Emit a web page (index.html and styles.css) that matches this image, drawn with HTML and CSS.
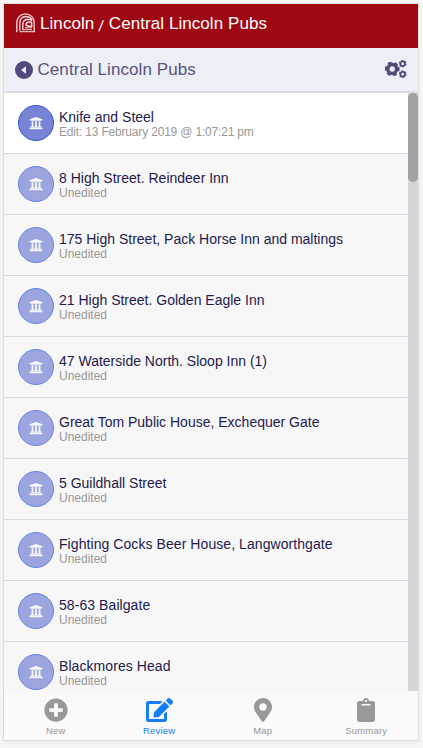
FILE: index.html
```html
<!DOCTYPE html>
<html lang="en">
<head>
<meta charset="utf-8">
<title>Central Lincoln Pubs</title>
<link rel="stylesheet" href="styles.css">
</head>
<body>
<svg class="defs" aria-hidden="true">
  <symbol id="building" viewBox="0 0 512 512"><path d="M496 128v16a8 8 0 0 1-8 8h-24v12c0 6.627-5.373 12-12 12H60c-6.627 0-12-5.373-12-12v-12H24a8 8 0 0 1-8-8v-16a8 8 0 0 1 4.941-7.392l232-88a7.996 7.996 0 0 1 6.118 0l232 88A8 8 0 0 1 496 128zm-24 304H40c-13.255 0-24 10.745-24 24v16a8 8 0 0 0 8 8h464a8 8 0 0 0 8-8v-16c0-13.255-10.745-24-24-24zM96 192v192H60c-6.627 0-12 5.373-12 12v20h416v-20c0-6.627-5.373-12-12-12h-36V192h-64v192h-64V192h-64v192h-64V192H96z"/></symbol>
</svg>
<div class="app">
  <header class="header">
    <svg class="logo" viewBox="0 0 19 20" fill="none" stroke="#fff">
      <path stroke-width="1.300" d="M.8 19.300V9.500a8.700 8.700 0 0 1 17.400 0V19.300"/>
      <path stroke-width="1.300" d="M3.800 17.800V10Q4 3.800 10 3.500Q14 3.500 16 6.800"/>
      <path stroke-width="1.400" d="M6.800 16.300V11.500Q7 6.500 12 6.300Q14.500 6.300 16 8"/>
      <path stroke-width="1.500" d="M12.300 12.800Q9.800 12.800 10 11.500Q10.300 9 13.500 9Q15 9 15.700 9.800V13.200H11.500"/>
      <path stroke-width="1" d="M9 14.800H16M6 16.700H16M3.500 18.700H18.500"/>
    </svg>
    <span class="crumb">Lincoln <span class="slash">/</span> Central Lincoln Pubs</span>
  </header>
  <div class="bar">
    <svg class="back" viewBox="0 0 18 18"><circle cx="9" cy="9" r="9" fill="#514a7b"/><path d="M11 5.200V12.800L6 9z" fill="#eceff5"/></svg>
    <h1 class="title">Central Lincoln Pubs</h1>
    <svg class="cogs" viewBox="0 0 22 18" fill="none" stroke="#514a7b">
      <circle cx="7.200" cy="9" r="4.400" stroke-width="3.500"/>
      <circle cx="7.200" cy="9" r="6.300" stroke-width="2.200" stroke-dasharray="3.800 2.797" stroke-dashoffset="-1.400" transform="rotate(-30 7.200 9)"/>
      <circle cx="17.700" cy="3.700" r="2.300" stroke-width="1.700"/>
      <circle cx="17.700" cy="3.700" r="3.200" stroke-width="1.200" stroke-dasharray="1.900 1.451"/>
      <circle cx="17.700" cy="14.200" r="2.300" stroke-width="1.700"/>
      <circle cx="17.700" cy="14.200" r="3.200" stroke-width="1.200" stroke-dasharray="1.900 1.451"/>
    </svg>
  </div>
  <main class="scroller">
    <ul class="list">
      <li class="row edited"><span class="badge"><svg><use href="#building"/></svg></span><div class="text"><div class="name">Knife and Steel</div><div class="state">Edit: 13 February 2019 @ 1:07:21 pm</div></div></li>
      <li class="row"><span class="badge"><svg><use href="#building"/></svg></span><div class="text"><div class="name">8 High Street. Reindeer Inn</div><div class="state">Unedited</div></div></li>
      <li class="row"><span class="badge"><svg><use href="#building"/></svg></span><div class="text"><div class="name">175 High Street, Pack Horse Inn and maltings</div><div class="state">Unedited</div></div></li>
      <li class="row"><span class="badge"><svg><use href="#building"/></svg></span><div class="text"><div class="name">21 High Street. Golden Eagle Inn</div><div class="state">Unedited</div></div></li>
      <li class="row"><span class="badge"><svg><use href="#building"/></svg></span><div class="text"><div class="name">47 Waterside North. Sloop Inn (1)</div><div class="state">Unedited</div></div></li>
      <li class="row"><span class="badge"><svg><use href="#building"/></svg></span><div class="text"><div class="name">Great Tom Public House, Exchequer Gate</div><div class="state">Unedited</div></div></li>
      <li class="row"><span class="badge"><svg><use href="#building"/></svg></span><div class="text"><div class="name">5 Guildhall Street</div><div class="state">Unedited</div></div></li>
      <li class="row"><span class="badge"><svg><use href="#building"/></svg></span><div class="text"><div class="name wide">Fighting Cocks Beer House, Langworthgate</div><div class="state">Unedited</div></div></li>
      <li class="row"><span class="badge"><svg><use href="#building"/></svg></span><div class="text"><div class="name wide">58-63 Bailgate</div><div class="state">Unedited</div></div></li>
      <li class="row"><span class="badge"><svg><use href="#building"/></svg></span><div class="text"><div class="name wide">Blackmores Head</div><div class="state">Unedited</div></div></li>
    </ul>
    <div class="track"><div class="thumb"></div></div>
  </main>
  <nav class="tabs">
    <a class="tab"><svg viewBox="0 0 512 512"><path d="M256 8C119 8 8 119 8 256s111 248 248 248 248-111 248-248S393 8 256 8zm144 276c0 6.600-5.400 12-12 12h-92v92c0 6.600-5.400 12-12 12h-56c-6.600 0-12-5.400-12-12v-92h-92c-6.600 0-12-5.400-12-12v-56c0-6.600 5.400-12 12-12h92v-92c0-6.600 5.400-12 12-12h56c6.600 0 12 5.400 12 12v92h92c6.600 0 12 5.400 12 12v56z"/></svg><span>New</span></a>
    <a class="tab active"><svg viewBox="0 0 576 512"><path d="M402.600 83.200l90.200 90.200c3.800 3.800 3.800 10 0 13.800L274.400 405.600l-92.800 10.300c-12.400 1.400-22.900-9.100-21.500-21.500l10.300-92.800L388.800 83.200c3.800-3.800 10-3.800 13.800 0zm162-22.900l-48.800-48.800c-15.200-15.200-39.900-15.200-55.200 0l-35.400 35.400c-3.800 3.800-3.800 10 0 13.800l90.200 90.200c3.800 3.800 10 3.800 13.800 0l35.400-35.400c15.200-15.300 15.200-40 0-55.200zM384 346.200V448H64V128h229.800c3.200 0 6.200-1.300 8.500-3.500l40-40c7.600-7.600 2.200-20.500-8.500-20.500H48C21.500 64 0 85.500 0 112v352c0 26.500 21.500 48 48 48h352c26.500 0 48-21.500 48-48V306.200c0-10.700-12.900-16-20.500-8.500l-40 40c-2.200 2.300-3.500 5.300-3.500 8.500z"/></svg><span>Review</span></a>
    <a class="tab"><svg viewBox="0 0 384 512"><path d="M172.268 501.670C26.970 291.031 0 269.413 0 192 0 85.961 85.961 0 192 0s192 85.961 192 192c0 77.413-26.970 99.031-172.268 309.670-9.535 13.774-29.930 13.773-39.464 0zM192 272c44.183 0 80-35.817 80-80s-35.817-80-80-80-80 35.817-80 80 35.817 80 80 80z"/></svg><span>Map</span></a>
    <a class="tab"><svg viewBox="0 0 384 512"><path d="M384 112v352c0 26.510-21.490 48-48 48H48c-26.510 0-48-21.490-48-48V112c0-26.510 21.490-48 48-48h80c0-35.290 28.710-64 64-64s64 28.710 64 64h80c26.510 0 48 21.490 48 48zM192 40c-13.255 0-24 10.745-24 24s10.745 24 24 24 24-10.745 24-24-10.745-24-24-24m96 114v-20a6 6 0 0 0-6-6H102a6 6 0 0 0-6 6v20a6 6 0 0 0 6 6h180a6 6 0 0 0 6-6z"/></svg><span>Summary</span></a>
  </nav>
</div>
</body>
</html>
```
FILE: styles.css
```css
* { box-sizing: border-box; }
body {
  margin: 0;
  height: 748px;
  padding: 3px 4px 7px 3px;
  background: #f7f7f7;
  font-family: "Liberation Sans", Arial, sans-serif;
  overflow: hidden;
}
.defs { display: none; }
.app {
  height: 738px;
  border: 1px solid #dedede;
  display: flex;
  flex-direction: column;
  background: #fafafa;
  box-shadow: 0 2px 6px rgba(0, 0, 0, .06);
}
.header {
  height: 44px;
  flex: none;
  display: flex;
  align-items: center;
  padding: 0 12px 4px 12px;
  background: #9f0813;
  color: #fff;
}
.logo { width: 19px; height: 20px; margin: -2px 5px 0 0; opacity: .85; }
.crumb { font-size: 17px; line-height: 20px; letter-spacing: .07px; white-space: nowrap; }
.slash { display: inline-block; font-size: 15px; transform: translateY(1.5px) skewX(-8deg); margin: 0 .3px; }
.bar {
  height: 45px;
  flex: none;
  display: flex;
  align-items: center;
  padding: 0 11px 0 11px;
  background: #eceff5;
  border-bottom: 2px solid #dedee0;
}
.back { width: 18px; height: 18px; margin-right: 4.5px; }
.title { margin: 0; flex: 1; font-size: 17px; line-height: 20px; font-weight: 400; letter-spacing: .07px; color: #5a5381; }
.cogs { width: 22px; height: 18px; margin-top: -2px; }
.scroller { height: 598px; flex: none; display: flex; overflow: hidden; }
.list { flex: 1; margin: 0; padding: 0; list-style: none; }
.row {
  height: 61px;
  display: flex;
  align-items: center;
  gap: 5px;
  padding-left: 14px;
  background: #f7f7f7;
  border-bottom: 1px solid #dadadd;
}
.edited { background: #fff; }
.badge {
  width: 36px;
  height: 36px;
  border-radius: 50%;
  border: 1px solid #6584e6;
  background: #9da5df;
  display: flex;
  align-items: center;
  justify-content: center;
}
.edited .badge { background: #7984d5; border-color: #2b55dc; }
.badge svg { width: 14px; height: 14px; fill: #fff; opacity: .93; }
.text { padding-top: 2px; white-space: nowrap; }
.name { font-size: 14px; line-height: 15px; color: #231b4d; }
.wide { letter-spacing: .07px; }
.state { font-size: 12px; line-height: 14px; color: #999; }
.edited .state { letter-spacing: -.18px; }
.track { width: 10px; background: #d6d5da; }
.thumb { height: 89px; border-radius: 5px; background: #a1a0a5; }
.tabs { flex: 1; display: flex; background: #fafafa; }
.tab {
  flex: 1;
  display: flex;
  flex-direction: column;
  align-items: center;
  padding-top: 7px;
  font-size: 9.5px;
  line-height: 12px;
  letter-spacing: .2px;
  color: #999;
}
.tab svg { height: 24px; margin-bottom: 3px; fill: currentColor; }
.active { color: #147efb; }
```
